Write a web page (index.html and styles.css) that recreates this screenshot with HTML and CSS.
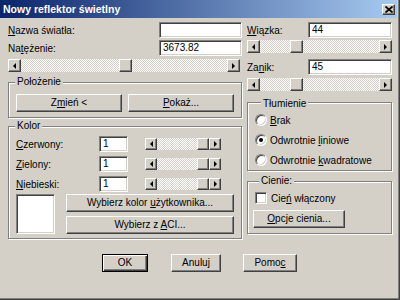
FILE: index.html
```html
<!DOCTYPE html>
<html>
  <head>
    <meta charset="utf-8">
    <title>Nowy reflektor świetlny</title>
    <link rel="stylesheet" href="styles.css">
  </head>
  <body>
  <div class="window">
    <div class="titlebar">
      <span class="caption">Nowy reflektor świetlny</span>
      <span class="close">
        <svg width="8" height="7" viewBox="0 0 8 7"><path d="M0.5 0.5l7 6M7.5 0.5l-7 6" stroke="#000" stroke-width="1.7" fill="none"/></svg>
      </span>
    </div>
    <div class="content">
      <div class="col left">
        <div class="field"><label><u>N</u>azwa światła:</label><span class="edit w83"></span></div>
        <div class="field mt2"><label>Na<u>t</u>ężenie:</label><span class="edit w83">3673.82</span></div>
        <div class="slider main mt3">
          <span class="arr l"></span><span class="track"><span class="thumb" style="margin-left:98px"></span></span><span class="arr r"></span>
        </div>

        <div class="group pos">
          <div class="legend">Położenie</div>
          <div class="btn-row">
            <span class="btn w106">Z<u>m</u>ień &lt;</span>
            <span class="btn w106"><u>P</u>okaż...</span>
          </div>
        </div>

        <div class="group color">
          <div class="legend">Kolor</div>
          <div class="crow"><label><u>C</u>zerwony:</label><span class="edit w29">1</span>
            <div class="slider small"><span class="arr l"></span><span class="track"><span class="thumb" style="margin-left:40px"></span></span><span class="arr r"></span></div>
          </div>
          <div class="crow"><label><u>Z</u>ielony:</label><span class="edit w29">1</span>
            <div class="slider small"><span class="arr l"></span><span class="track"><span class="thumb" style="margin-left:40px"></span></span><span class="arr r"></span></div>
          </div>
          <div class="crow"><label><u>N</u>iebieski:</label><span class="edit w29">1</span>
            <div class="slider small"><span class="arr l"></span><span class="track"><span class="thumb" style="margin-left:40px"></span></span><span class="arr r"></span></div>
          </div>
          <div class="swatch-row">
            <span class="swatch"></span>
            <div class="pick">
              <span class="btn">Wybierz kolor <u>u</u>żytkownika...</span>
              <span class="btn">Wybierz z <u>A</u>CI...</span>
            </div>
          </div>
        </div>
      </div>

      <div class="col right">
        <div class="field"><label><u>W</u>iązka:</label><span class="edit w84">44</span></div>
        <div class="slider side mt2">
          <span class="arr l"></span><span class="track"><span class="thumb" style="margin-left:30px"></span></span><span class="arr r"></span>
        </div>
        <div class="field mt6"><label>Za<u>n</u>ik:</label><span class="edit w84">45</span></div>
        <div class="slider side mt3">
          <span class="arr l"></span><span class="track"><span class="thumb" style="margin-left:30px"></span></span><span class="arr r"></span>
        </div>

        <div class="group tlum">
          <div class="legend">Tłumienie</div>
          <div class="radio"><span class="dot"></span><span><u>B</u>rak</span></div>
          <div class="radio"><span class="dot on"></span><span>Odwrotnie <u>l</u>iniowe</span></div>
          <div class="radio"><span class="dot"></span><span>Odwrotnie <u>k</u>wadratowe</span></div>
        </div>

        <div class="group shadow">
          <div class="legend">Cienie:</div>
          <div class="check"><span class="box"></span><span>Cie<u>ń</u> włączony</span></div>
          <span class="btn w92"><u>O</u>pcje cienia...</span>
        </div>
      </div>
    </div>

    <div class="footer">
      <span class="btn default w46">OK</span>
      <span class="btn w50">Anuluj</span>
      <span class="btn w54">Pomo<u>c</u></span>
    </div>
  </div>
  </body>
</html>
```

FILE: styles.css
```css
* {
  box-sizing: border-box;
}
html, body {
  margin: 0;
}
body {
  background: #d4d0c8;
  font-family: "Liberation Sans", Arial, sans-serif;
  font-size: 10px;
  color: #000;
}
u {
  text-decoration: underline;
  text-underline-offset: 1px;
}

.window {
  width: 400px;
  height: 300px;
  border-right: 1px solid #404040;
  border-bottom: 1px solid #404040;
  box-shadow: inset -1px -1px #808080;
}
.titlebar {
  height: 18px;
  margin-right: 2px;
  padding: 0 2px 0 3px;
  display: flex;
  align-items: center;
  justify-content: space-between;
  background: linear-gradient(to right, #0a246a, #a6caf0);
}
.caption {
  color: #fff;
  font-weight: bold;
  font-size: 10.5px;
}
.close {
  width: 13px;
  height: 11px;
  display: flex;
  align-items: center;
  justify-content: center;
  background: #d4d0c8;
  border: 1px solid;
  border-color: #fff #404040 #404040 #fff;
  box-shadow: inset -1px -1px #808080;
}

.content {
  display: grid;
  grid-template-columns: 234px 145px;
  column-gap: 5px;
  padding: 4px 0 0 8px;
}
.col {
  display: flex;
  flex-direction: column;
}

.field {
  display: flex;
  align-items: center;
  height: 16px;
}
.field label {
  flex: 1;
}
.mt2 { margin-top: 2px; }
.mt3 { margin-top: 3px; }
.mt6 { margin-top: 6px; }

.edit {
  display: block;
  height: 16px;
  padding: 0 3px;
  line-height: 14px;
  background: #fff;
  border: 1px solid;
  border-color: #808080 #fff #fff #808080;
  box-shadow: inset 1px 1px #404040, inset -1px -1px #d4d0c8;
}
.w29 { width: 29px; }
.w83 { width: 83px; }
.w84 { width: 84px; }

/* raised 3d look */
.btn, .arr, .thumb {
  background: #d4d0c8;
  border: 1px solid;
  border-color: #fff #404040 #404040 #fff;
  box-shadow: inset -1px -1px #808080;
}
.btn {
  display: block;
  height: 18px;
  line-height: 16px;
  text-align: center;
}
.btn.default {
  border-color: #000;
  box-shadow: inset 1px 1px #fff, inset -1px -1px #404040, inset -2px -2px #808080;
}
.w46 { width: 46px; }
.w50 { width: 50px; }
.w54 { width: 54px; }
.w92 { width: 92px; }
.w106 { width: 106px; }

.slider {
  display: flex;
  height: 13px;
}
.slider.main {
  width: 232px;
}
.slider.small {
  width: 76px;
  height: 12px;
  margin-left: 17px;
}
.arr {
  width: 13px;
  display: flex;
  align-items: center;
  justify-content: center;
}
.small .arr {
  width: 12px;
}
.arr::before {
  content: "";
  border-style: solid;
  border-color: transparent;
}
.arr.l::before {
  border-width: 3px 3px 3px 0;
  border-right-color: #000;
}
.arr.r::before {
  border-width: 3px 0 3px 3px;
  border-left-color: #000;
}
.track {
  flex: 1;
  display: flex;
  background: repeating-conic-gradient(#fff 0 25%, #d4d0c8 0 50%) 0 0 / 2px 2px;
}
.thumb {
  width: 13px;
}
.small .thumb {
  width: 12px;
}

.group {
  border: 1px solid #808080;
  box-shadow: inset 1px 1px #fff, 1px 1px #fff;
}
.legend {
  width: fit-content;
  margin: -7px 0 0 6px;
  padding: 0 2px;
  line-height: 12px;
  background: #d4d0c8;
}

.group.pos {
  margin-top: 10px;
  padding: 0 7px 5px;
}
.pos .legend {
  margin-left: -1px;
}
.btn-row {
  display: flex;
  gap: 6px;
  margin-top: 6px;
}

.group.color {
  margin-top: 8px;
  padding: 0 7px 4px;
}
.color .legend {
  margin-left: -1px;
}
.crow {
  display: flex;
  align-items: center;
  height: 16px;
  margin-top: 4px;
}
.crow:first-of-type {
  margin-top: 6px;
}
.crow label {
  width: 83px;
}
.swatch-row {
  display: flex;
  gap: 11px;
  margin-top: 2px;
}
.swatch {
  width: 39px;
  height: 40px;
  background: #fff;
  border: 1px solid;
  border-color: #808080 #fff #fff #808080;
  box-shadow: inset 1px 1px #404040, inset -1px -1px #d4d0c8;
}
.pick {
  flex: 1;
  display: flex;
  flex-direction: column;
  gap: 4px;
}

.group.tlum {
  margin-top: 11px;
  padding: 2px 0 0 7px;
}
.radio {
  display: flex;
  align-items: center;
  gap: 3px;
  height: 20px;
}
.dot {
  width: 12px;
  height: 12px;
  border-radius: 50%;
  background: #fff;
  border: 1px solid;
  border-color: #808080 #fff #fff #808080;
  box-shadow: inset 1px 1px #404040, inset -1px -1px #d4d0c8;
  display: flex;
  align-items: center;
  justify-content: center;
}
.dot.on::before {
  content: "";
  width: 4px;
  height: 4px;
  border-radius: 50%;
  background: #000;
}

.group.shadow {
  margin-top: 10px;
  padding: 0 0 5px 5px;
}
.check {
  display: flex;
  align-items: center;
  gap: 4px;
  height: 14px;
  margin: 4px 0 0 2px;
}
.box {
  width: 12px;
  height: 12px;
  background: #fff;
  border: 1px solid;
  border-color: #808080 #fff #fff #808080;
  box-shadow: inset 1px 1px #404040, inset -1px -1px #d4d0c8;
}
.shadow .btn {
  margin-top: 5px;
}

.footer {
  display: flex;
  justify-content: center;
  gap: 23px;
  margin-top: 15px;
}
.footer .btn:last-child {
  margin-left: -1px;
}
```
